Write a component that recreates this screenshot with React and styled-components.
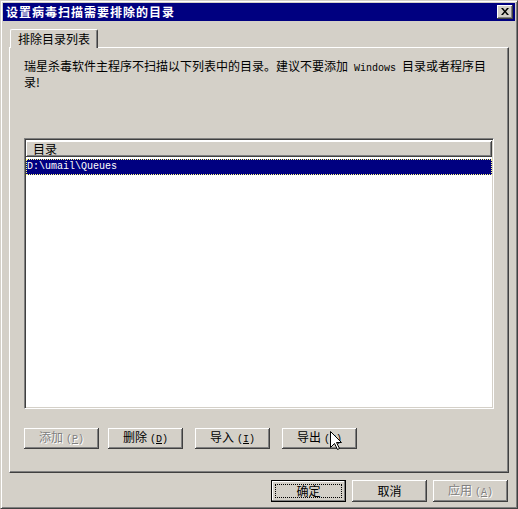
import React from "react";
import styled, { createGlobalStyle } from "styled-components";

const C = {
  face: "#d4d0c8",
  light: "#ffffff",
  shadow: "#808080",
  dark: "#404040",
  navy: "#000080",
};

const GlobalStyle = createGlobalStyle`
  html, body { margin: 0; padding: 0; background: ${C.face}; }
  body {
    font-family: "Noto Sans CJK SC", "Noto Sans", sans-serif;
    font-size: 12px;
    color: #000;
  }
  * { box-sizing: border-box; }
`;

const Window = styled.div`
  position: relative;
  width: 518px;
  height: 509px;
  background: ${C.face};
  border: 1px solid;
  border-color: ${C.face} ${C.dark} ${C.dark} ${C.face};
  box-shadow: inset 1px 1px ${C.light}, inset -1px -1px ${C.shadow};
  padding: 2px;
  display: flex;
  flex-direction: column;
`;

const TitleBar = styled.div`
  height: 18px;
  flex: none;
  background: ${C.navy};
  display: flex;
  align-items: center;
  justify-content: space-between;
  padding: 0 2px 0 3px;
`;

const TitleText = styled.div`
  color: #fff;
  font-weight: bold;
  font-size: 12px;
  letter-spacing: 1px;
  line-height: 18px;
`;

const CloseBtn = styled.div`
  width: 16px;
  height: 14px;
  background: ${C.face};
  box-shadow: inset -1px -1px ${C.dark}, inset 1px 1px ${C.light},
    inset -2px -2px ${C.shadow};
  display: flex;
  align-items: center;
  justify-content: center;
  padding-bottom: 1px;
`;

const Body = styled.div`
  flex: 1;
  display: flex;
  flex-direction: column;
  padding: 8px 6px 0 6px;
`;

const TabStrip = styled.div`
  display: flex;
  padding-left: 1px;
  height: 18px;
  flex: none;
`;

const Tab = styled.div`
  position: relative;
  z-index: 1;
  height: 19px;
  padding: 0 7px 0 7px;
  background: ${C.face};
  border-top: 1px solid ${C.light};
  border-left: 1px solid ${C.light};
  border-right: 1px solid ${C.dark};
  box-shadow: inset -1px 0 ${C.shadow};
  border-radius: 2px 2px 0 0;
  line-height: 17px;
  font-size: 12px;
`;

const Panel = styled.div`
  height: 426px;
  flex: none;
  border-top: 1px solid ${C.light};
  border-left: 1px solid ${C.light};
  border-right: 1px solid ${C.dark};
  border-bottom: 1px solid ${C.dark};
  box-shadow: inset -1px -1px ${C.shadow};
  padding: 11px 14px 0 14px;
  display: flex;
  flex-direction: column;
`;

const Desc = styled.div`
  line-height: 13px;
  font-size: 12px;
  white-space: nowrap;
  height: 26px;
`;

const Mono = styled.span`
  font-family: "Liberation Mono", "DejaVu Sans Mono", monospace;
  font-size: 10px;
`;

const ListBox = styled.div`
  margin-top: 53px;
  height: 271px;
  background: #fff;
  border-top: 1px solid ${C.shadow};
  border-left: 1px solid ${C.shadow};
  border-right: 1px solid ${C.light};
  border-bottom: 1px solid ${C.light};
  box-shadow: inset 1px 1px ${C.dark}, inset -1px -1px ${C.face};
  padding: 2px 1px 1px 1px;
  display: flex;
  flex-direction: column;
`;

const ListHeader = styled.div`
  height: 16px;
  background: ${C.face};
  box-shadow: inset -1px -1px ${C.dark}, inset 1px 1px ${C.light},
    inset -2px -2px ${C.shadow};
  padding-left: 7px;
  line-height: 16px;
  font-size: 12px;
`;

const ListRow = styled.div`
  margin-top: 2px;
  height: 16px;
  background: ${props => (props.$selected ? C.navy : "transparent")};
  color: ${props => (props.$selected ? "#fff" : "#000")};
  border: 1px dotted ${props => (props.$selected ? "#ffff80" : "transparent")};
  line-height: 14px;
  font-family: "Liberation Mono", "DejaVu Sans Mono", monospace;
  font-size: 10px;
`;

const ButtonRow = styled.div`
  display: flex;
  margin-top: 19px;
  gap: 12px;
`;

const Button = styled.div`
  position: relative;
  width: 75px;
  height: ${props => props.$h || 21}px;
  flex: none;
  background: ${C.face};
  display: flex;
  align-items: center;
  justify-content: center;
  font-size: 12px;
  color: ${props => (props.$disabled ? C.shadow : "#000")};
  text-shadow: ${props => (props.$disabled ? `1px 1px ${C.light}` : "none")};
  border: ${props => (props.$default ? "1px solid #000" : "none")};
  box-shadow: ${props =>
    props.$default
      ? `inset -1px -1px ${C.shadow}, inset 1px 1px ${C.light}`
      : `inset -1px -1px ${C.dark}, inset 1px 1px ${C.light}, inset -2px -2px ${C.shadow}`};
  margin-left: ${props => props.$ml || 0}px;
`;

const Focus = styled.div`
  position: absolute;
  inset: 3px;
  border: 1px dotted #000;
`;

const Label = styled.span`
  position: relative;
  line-height: 14px;
`;

const AccWrap = styled(Mono)`
  margin-left: 3px;
`;

const Footer = styled.div`
  display: flex;
  justify-content: flex-end;
  gap: 6px;
  margin-top: 7px;
  padding-right: 1px;
`;

const Cursor = styled.svg`
  position: absolute;
  left: 48px;
  top: 3px;
  z-index: 3;
`;

const Acc = ({ k }) => (
  <AccWrap>
    (<u>{k}</u>)
  </AccWrap>
);

export default function App() {
  return (
    <>
      <GlobalStyle />
      <Window>
        <TitleBar>
          <TitleText>设置病毒扫描需要排除的目录</TitleText>
          <CloseBtn>
            <svg width="8" height="7" viewBox="0 0 8 7">
              <path d="M0 0h2l2 2.5L6 0h2L5 3.5 8 7H6L4 4.5 2 7H0l3-3.5z" fill="#000" />
            </svg>
          </CloseBtn>
        </TitleBar>
        <Body>
          <TabStrip>
            <Tab>排除目录列表</Tab>
          </TabStrip>
          <Panel>
            <Desc>
              瑞星杀毒软件主程序不扫描以下列表中的目录。建议不要添加<Mono> Windows </Mono>目录或者程序目
              <br />
              录!
            </Desc>
            <ListBox>
              <ListHeader>目录</ListHeader>
              <ListRow $selected>D:\umail\Queues</ListRow>
            </ListBox>
            <ButtonRow>
              <Button $disabled>
                <Label>添加<Acc k="P" /></Label>
              </Button>
              <Button $ml={-3}>
                <Label>删除<Acc k="D" /></Label>
              </Button>
              <Button>
                <Label>导入<Acc k="I" /></Label>
              </Button>
              <Button>
                <Label>导出<Acc k="E" /></Label>
                <Cursor width="13" height="20" viewBox="0 0 13 20">
                  <path
                    d="M0.5 0.5 L0.5 16.5 L4.5 12.5 L7.5 18.5 L9.5 17.5 L6.5 11.5 L11.5 11.5 Z"
                    fill="#fff"
                    stroke="#000"
                    strokeWidth="1"
                  />
                </Cursor>
              </Button>
            </ButtonRow>
          </Panel>
          <Footer>
            <Button $default $h={22}>
              <Focus />
              <Label>确定</Label>
            </Button>
            <Button $h={22}>
              <Label>取消</Label>
            </Button>
            <Button $h={22} $disabled>
              <Label>应用<Acc k="A" /></Label>
            </Button>
          </Footer>
        </Body>
      </Window>
    </>
  );
}
